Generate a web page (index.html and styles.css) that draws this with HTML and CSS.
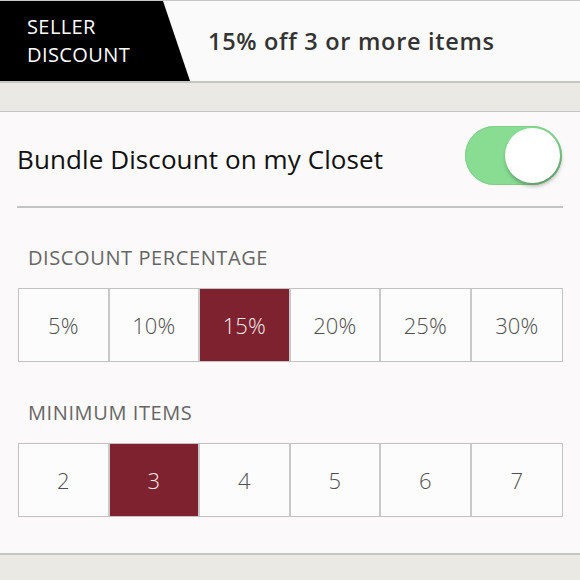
FILE: index.html
```html
<!DOCTYPE html>
<html>
<head>
<meta charset="utf-8">
<link rel="stylesheet" href="styles.css">
</head>
<body>
<div class="page">
  <header class="banner">
    <div class="tag"><span>SELLER<br>DISCOUNT</span></div>
    <div class="offer">15% off 3 or more items</div>
  </header>
  <div class="spacer"></div>
  <section class="panel">
    <div class="row-toggle">
      <div class="title">Bundle Discount on my Closet</div>
      <div class="switch"><div class="knob"></div></div>
    </div>
    <div class="divider"></div>
    <div class="label">DISCOUNT PERCENTAGE</div>
    <div class="seg">
      <div class="cell">5%</div>
      <div class="cell">10%</div>
      <div class="cell on">15%</div>
      <div class="cell">20%</div>
      <div class="cell">25%</div>
      <div class="cell">30%</div>
    </div>
    <div class="label label2">MINIMUM ITEMS</div>
    <div class="seg">
      <div class="cell">2</div>
      <div class="cell on">3</div>
      <div class="cell">4</div>
      <div class="cell">5</div>
      <div class="cell">6</div>
      <div class="cell">7</div>
    </div>
  </section>
  <div class="spacer bottom"></div>
</div>
</body>
</html>
```
FILE: styles.css
```css
html, body { margin: 0; padding: 0; }
body {
  width: 580px; height: 580px; overflow: hidden;
  background: #ebe9e4;
  font-family: "Open Sans", "Liberation Sans", sans-serif;
}
.page { display: flex; flex-direction: column; }
.banner {
  height: 80px;
  display: flex; align-items: center;
  background: #fbfafa;
  border-top: 1px solid #c8c8c8;
  border-bottom: 2px solid #c6c6c4;
}
.tag {
  align-self: stretch;
  width: 190px;
  background: #000;
  clip-path: polygon(0 0, 163px 0, 190px 100%, 0 100%);
  color: #fff;
  font-size: 20px; line-height: 28px;
  letter-spacing: 0.4px;
  display: flex; align-items: center;
  padding-left: 27px; box-sizing: border-box;
}
.offer {
  margin-left: 18px;
  font-size: 23.5px; font-weight: 600;
  color: #333;
  letter-spacing: 0.7px;
}
.spacer { height: 28px; border-bottom: 1px solid #c6c6c4; }
.panel {
  background: #fbf9f9;
  height: 441px;
  padding: 0 17px;
  box-sizing: border-box;
}
.row-toggle {
  display: flex; align-items: center; justify-content: space-between;
  height: 94px;
}
.title { font-size: 26px; color: #111; letter-spacing: 0.1px; }
.switch {
  width: 97px; height: 59px; border-radius: 30px;
  background: #88dd93;
  position: relative; margin: -8px 1px 0 0;
  box-shadow: inset 0 0 0 1px #80d08a;
}
.knob {
  position: absolute; right: 2px; top: 2px;
  width: 55px; height: 55px; border-radius: 50%;
  background: #fff;
  box-shadow: 1px 3px 4px rgba(0,0,0,0.3);
}
.divider { height: 2px; background: #c4c4c4; }
.label {
  margin: 40px 0 0 11px;
  font-size: 20px; color: #666; line-height: 20px;
  letter-spacing: 0.6px;
}
.label2 { margin-top: 41px; }
.seg {
  display: grid; grid-template-columns: repeat(6, 1fr);
  margin: 20px 0 0 1px;
  border: 1px solid #c2c2c2;
  height: 72px;
}
.cell {
  display: flex; align-items: center; justify-content: center;
  font-size: 22px; font-weight: 300; color: #4f4f4f;
  border-right: 2px solid #c8c8c8;
  background: #fdfcfc;
}
.cell:last-child { border-right: 0; }
.cell.on { background: #7e2230; color: #f3e9ea; }
.bottom { border-bottom: 0; border-top: 2px solid #c6c6c4; height: 40px; }
```
